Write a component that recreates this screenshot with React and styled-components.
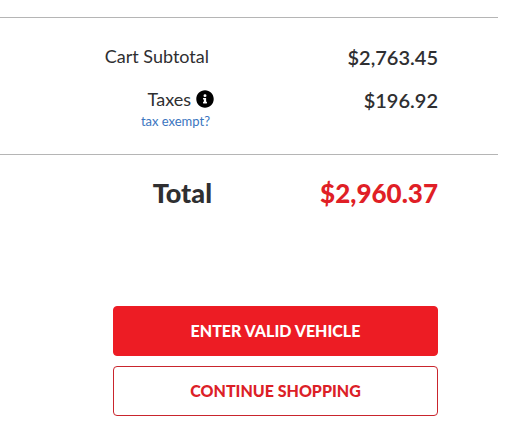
import React from 'react';
import styled, { createGlobalStyle } from 'styled-components';

const GlobalStyle = createGlobalStyle`
  * {
    box-sizing: border-box;
  }

  body {
    margin: 0;
    background: #fff;
    color: #2f2f31;
    font-family: Lato, 'Liberation Sans', sans-serif;
  }
`;

const Summary = styled.main`
  margin-right: 32px;
  padding-top: 17px;
`;

const Section = styled.dl`
  margin: 0;
  padding: ${({ $padding }) => $padding};
  border-top: 1px solid #b5b5b5;
`;

const Row = styled.div`
  display: flex;
  justify-content: space-between;
  align-items: flex-start;
  margin-top: ${({ $gap }) => $gap || 0};
`;

const Label = styled.dt`
  width: 50%;
  padding-right: ${({ $inset }) => $inset || '0'};
  text-align: right;
  font-size: ${({ $total }) => ($total ? '27px' : '18px')};
  font-weight: ${({ $total }) => ($total ? 900 : 400)};
  line-height: ${({ $total }) => ($total ? '32px' : '22px')};
`;

const Amount = styled.dd`
  margin: 0;
  color: ${({ $total }) => ($total ? '#e01f26' : 'inherit')};
  font-size: ${({ $total }) => ($total ? '26px' : '20px')};
  font-weight: ${({ $total }) => ($total ? 900 : 600)};
  line-height: ${({ $total }) => ($total ? '32px' : '24px')};
`;

const TaxTitle = styled.span`
  display: flex;
  justify-content: flex-end;
  align-items: center;
  gap: 5px;
`;

const InfoButton = styled.button`
  display: flex;
  padding: 0;
  border: 0;
  background: none;
  color: #000;
  cursor: pointer;
`;

const ExemptLink = styled.a`
  display: block;
  padding-right: 4px;
  color: #3a75c0;
  font-size: 13px;
  line-height: 22px;
  text-decoration: none;
`;

const Actions = styled.div`
  display: flex;
  flex-direction: column;
  gap: 10px;
  padding: 97px 60px 0 113px;
`;

const ActionButton = styled.button`
  height: 50px;
  padding: 0 6px 2px;
  border: 1px solid ${({ $primary }) => ($primary ? '#ed1c24' : '#c9252d')};
  border-radius: 4px;
  background: ${({ $primary }) => ($primary ? '#ed1c24' : '#fff')};
  color: ${({ $primary }) => ($primary ? '#fff' : '#dc2027')};
  font-family: inherit;
  font-size: 16px;
  font-weight: 900;
  text-transform: uppercase;
  cursor: pointer;
`;

function InfoIcon() {
  return (
    <svg width="18" height="18" viewBox="0 0 512 512" fill="currentColor" aria-hidden="true">
      <path d="M256 8C119 8 8 119 8 256s111 248 248 248 248-111 248-248S393 8 256 8zm0 110a42 42 0 1 1 0 84 42 42 0 1 1 0-84zm56 254c0 7-5 12-12 12h-88c-7 0-12-5-12-12v-24c0-7 5-12 12-12h12v-64h-12c-7 0-12-5-12-12v-24c0-7 5-12 12-12h64c7 0 12 5 12 12v100h12c7 0 12 5 12 12v24z" />
    </svg>
  );
}

function App() {
  return (
    <>
      <GlobalStyle />
      <Summary>
        <Section $padding="27px 60px 22px 0">
          <Row>
            <Label $inset="10px">Cart Subtotal</Label>
            <Amount>$2,763.45</Amount>
          </Row>
          <Row $gap="19px">
            <Label $inset="5px">
              <TaxTitle>
                Taxes
                <InfoButton type="button" aria-label="Tax information">
                  <InfoIcon />
                </InfoButton>
              </TaxTitle>
              <ExemptLink href="#tax-exempt">tax exempt?</ExemptLink>
            </Label>
            <Amount>$196.92</Amount>
          </Row>
        </Section>
        <Section $padding="22px 60px 0 0">
          <Row>
            <Label $total $inset="7px">Total</Label>
            <Amount $total>$2,960.37</Amount>
          </Row>
        </Section>
        <Actions>
          <ActionButton type="button" $primary>Enter valid vehicle</ActionButton>
          <ActionButton type="button">Continue shopping</ActionButton>
        </Actions>
      </Summary>
    </>
  );
}

export default App;
